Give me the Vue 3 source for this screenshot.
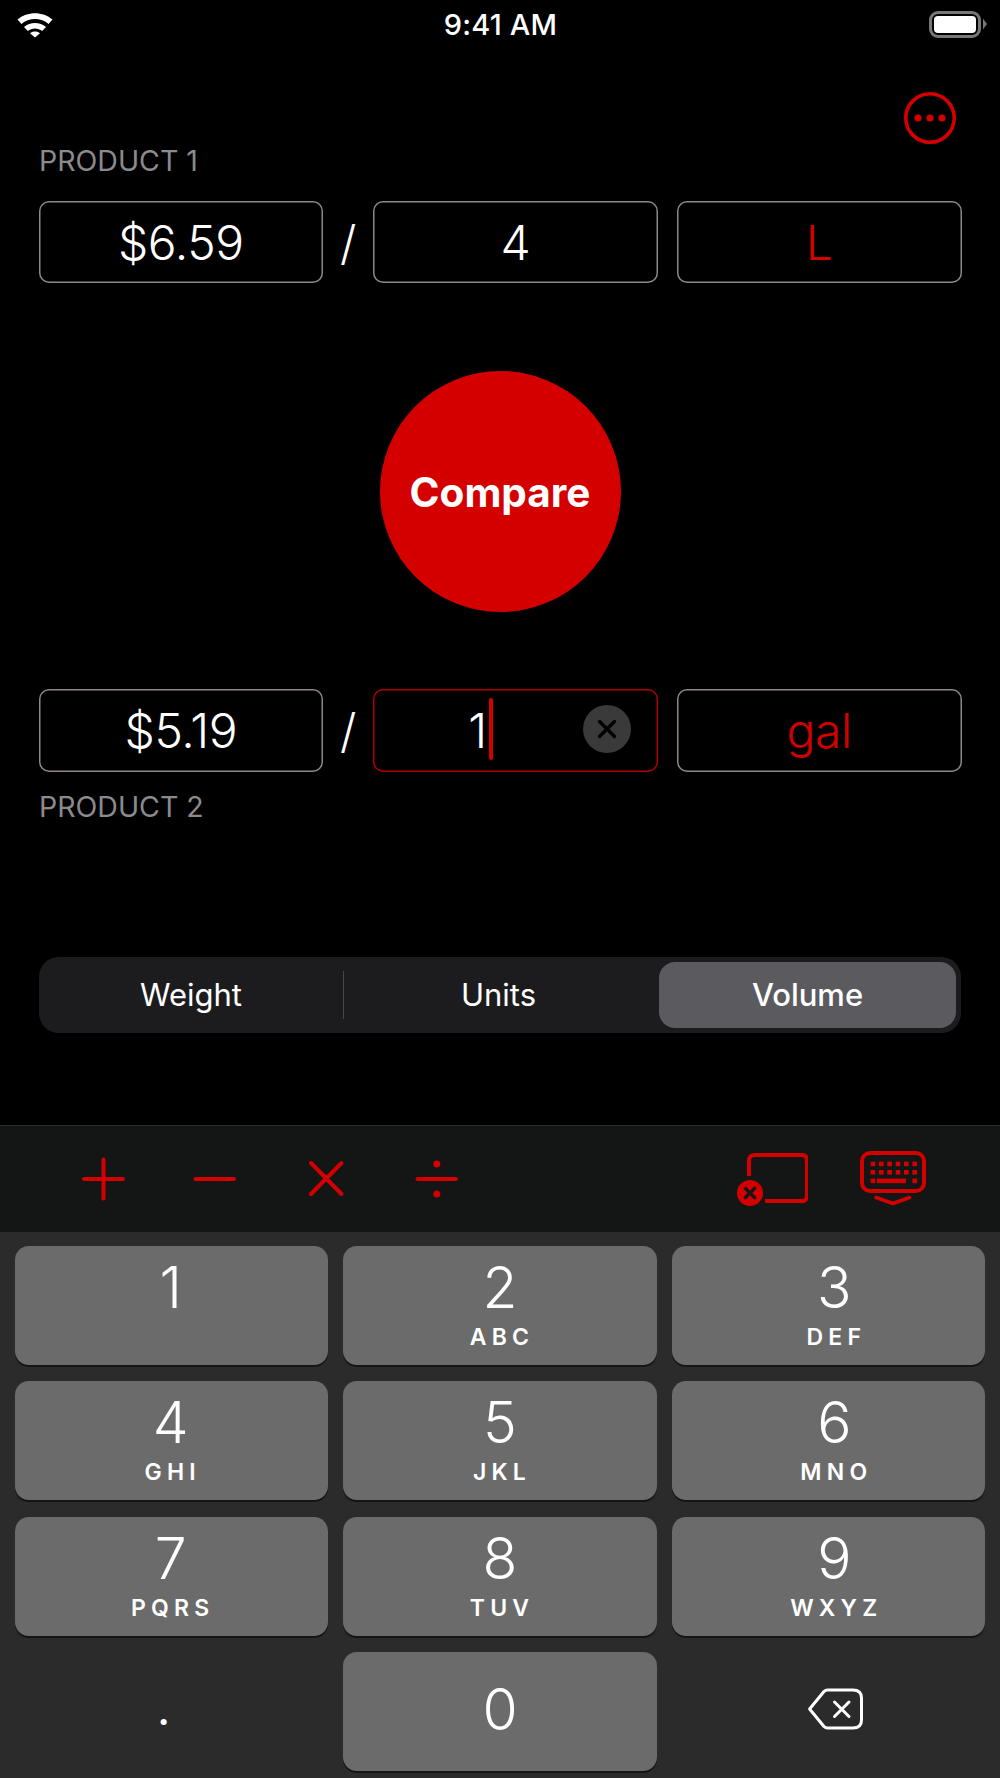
<script setup>
const keys = [
  { n: '1', l: '' },
  { n: '2', l: 'ABC' },
  { n: '3', l: 'DEF' },
  { n: '4', l: 'GHI' },
  { n: '5', l: 'JKL' },
  { n: '6', l: 'MNO' },
  { n: '7', l: 'PQRS' },
  { n: '8', l: 'TUV' },
  { n: '9', l: 'WXYZ' },
];
const keyboardDots = [];
for (const y of [1, 9.4]) {
  for (let i = 0; i < 6; i++) keyboardDots.push({ x: 10.6 + i * 8.35, y });
}
</script>

<template>
  <div class="screen">
    <div class="status">
      <svg class="wifi" width="38" height="28" viewBox="0 0 38 28">
        <path d="M1.5 9.5C11 1 27 1 36.5 9.5L32.6 14C25 7.4 13 7.4 5.4 14Z" fill="#fff" />
        <path d="M8 17C14 11.8 24 11.8 30 17L26.2 21C22.2 17.6 15.8 17.6 11.8 21Z" fill="#fff" />
        <path d="M14 23.2C16.8 20.8 21.2 20.8 24 23.2L19 27.6Z" fill="#fff" />
      </svg>
      <span class="time">9:41 AM</span>
      <div class="battery">
        <div class="battery-fill"></div>
        <div class="battery-nub"></div>
      </div>
    </div>

    <div class="more-row">
      <svg width="52" height="52" viewBox="0 0 52 52">
        <circle cx="26" cy="26" r="24.2" fill="none" stroke="#d40000" stroke-width="3.6" />
        <circle cx="14" cy="26" r="3.6" fill="#d40000" />
        <circle cx="26" cy="26" r="3.6" fill="#d40000" />
        <circle cx="38" cy="26" r="3.6" fill="#d40000" />
      </svg>
    </div>

    <div class="label first">PRODUCT 1</div>
    <div class="fields first-fields">
      <div class="field">$6.59</div>
      <div class="slash">/</div>
      <div class="field">4</div>
      <div class="field unit">L</div>
    </div>

    <button class="compare">Compare</button>

    <div class="fields second-fields">
      <div class="field">$5.19</div>
      <div class="slash">/</div>
      <div class="field active">
        <span class="typed">1<i class="caret"></i></span>
        <svg class="clear" width="48" height="48" viewBox="0 0 48 48">
          <circle cx="24" cy="24" r="24" fill="#3a3a3a" />
          <path d="M16.5 16.5L31.5 31.5M31.5 16.5L16.5 31.5" stroke="#000" stroke-width="3.4" stroke-linecap="round" />
        </svg>
      </div>
      <div class="field unit">gal</div>
    </div>
    <div class="label second">PRODUCT 2</div>

    <div class="segments">
      <div class="seg seg-weight">Weight</div>
      <div class="seg seg-units">Units</div>
      <div class="seg seg-volume">Volume</div>
    </div>

    <div class="toolbar">
      <svg class="ops" width="480" height="60" viewBox="0 0 480 60">
        <g stroke="#d40000" stroke-width="4" stroke-linecap="round" fill="none">
          <path d="M84 30H123M103.5 10.5V49.5" />
          <path d="M195.5 30H234" />
          <path d="M311 14L341.5 45M341.5 14L311 45" />
          <path d="M417.5 30H456" />
        </g>
        <circle cx="436.8" cy="15" r="3.5" fill="#d40000" />
        <circle cx="436.8" cy="45" r="3.5" fill="#d40000" />
      </svg>
      <svg class="clear-all" width="72" height="64" viewBox="0 0 72 64">
        <path d="M13 24V9Q13 3 19 3H66Q71 3 71 9V43Q71 49 66 49H29" fill="none" stroke="#d40000" stroke-width="4" />
        <circle cx="14" cy="41" r="13" fill="#d40000" />
        <path d="M9.4 36.4L18.6 45.6M18.6 36.4L9.4 45.6" stroke="#141515" stroke-width="3.4" stroke-linecap="round" />
      </svg>
      <svg class="hide-kb" width="66" height="56" viewBox="0 0 66 56">
        <rect x="2" y="2" width="62" height="38" rx="8" fill="none" stroke="#d40000" stroke-width="4" />
        <rect v-for="(d, i) in keyboardDots" :key="i" :x="d.x" :y="d.y + 9.6" width="4.6" height="4.6" fill="#d40000" />
        <rect x="10.6" y="27.6" width="4.6" height="4.6" fill="#d40000" />
        <rect x="17" y="27.6" width="29" height="4.6" fill="#d40000" />
        <rect x="52.4" y="27.6" width="4.6" height="4.6" fill="#d40000" />
        <path d="M16 46.5L33 52.5L49.5 46.5" fill="none" stroke="#d40000" stroke-width="3.6" stroke-linecap="round" stroke-linejoin="round" />
      </svg>
    </div>

    <div class="keypad">
      <div v-for="k in keys" :key="k.n" class="key">
        <span class="digit">{{ k.n }}</span>
        <span class="letters">{{ k.l }}</span>
      </div>
      <div class="key plain"><span class="point">.</span></div>
      <div class="key">
        <span class="digit zero">0</span>
      </div>
      <div class="key plain">
        <svg class="backspace" width="56" height="42" viewBox="0 0 56 42">
          <path d="M2.6 21L17 3.5Q18.5 2 20.5 2H46Q54.5 2 54.5 10V32Q54.5 40 46 40H20.5Q18.5 40 17 38.5Z" fill="none" stroke="#fff" stroke-width="3" stroke-linejoin="round" />
          <path d="M27.5 14L42 28.5M42 14L27.5 28.5" stroke="#fff" stroke-width="3" stroke-linecap="round" />
        </svg>
      </div>
    </div>
  </div>
</template>

<style scoped>
.screen {
  width: 1000px;
  height: 1778px;
  overflow: hidden;
  background: #000;
  color: #fff;
  font-family: Inter, "Liberation Sans", sans-serif;
  display: flex;
  flex-direction: column;
}
.status {
  height: 48px;
  flex: none;
  display: flex;
  align-items: center;
  justify-content: space-between;
  padding: 0 19px 0 16px;
}
.wifi {
  margin-top: -1px;
}
.time {
  font-size: 29px;
  font-weight: 500;
  letter-spacing: 0.2px;
  margin-left: 18px;
}
.battery {
  width: 52px;
  height: 27px;
  box-sizing: border-box;
  border: 3px solid #777;
  border-radius: 9px;
  padding: 2px;
  position: relative;
}
.battery-fill {
  width: 100%;
  height: 100%;
  background: #fff;
  border-radius: 4px;
}
.battery-nub {
  position: absolute;
  right: -9px;
  top: 5px;
  width: 4px;
  height: 11px;
  background: #777;
  clip-path: polygon(0 0, 100% 50%, 0 100%);
}
.more-row {
  margin-top: 44px;
  height: 52px;
  flex: none;
  display: flex;
  justify-content: flex-end;
  padding-right: 44px;
}
.label {
  flex: none;
  margin-left: 39px;
  font-size: 28.5px;
  line-height: 30px;
  color: #8b8b8d;
}
.label.first {
  margin-top: 1.5px;
}
.label.second {
  margin-top: 19.5px;
}
.fields {
  flex: none;
  display: flex;
  margin: 0 38.5px;
}
.first-fields {
  margin-top: 25px;
}
.second-fields {
  margin-top: 77px;
}
.field {
  flex: 1;
  height: 82.5px;
  box-sizing: border-box;
  box-shadow: inset 0 0 0 1.5px #8f8786;
  border-radius: 10px;
  display: flex;
  align-items: center;
  justify-content: center;
  font-size: 48px;
  font-weight: 350;
  letter-spacing: -0.4px;
  padding-top: 1px;
  position: relative;
}
.field.unit {
  color: #d40000;
  margin-left: 19px;
}
.field.active {
  box-shadow: inset 0 0 0 1.5px #b00000;
}
.slash {
  width: 50px;
  flex: none;
  text-align: center;
  font-size: 47px;
  font-weight: 300;
  line-height: 83px;
}
.typed {
  position: relative;
  margin-right: 76px;
}
.caret {
  position: absolute;
  left: 100%;
  margin-left: 2px;
  top: -3px;
  width: 4.5px;
  height: 62px;
  border-radius: 3px;
  background: #d40000;
}
.clear {
  position: absolute;
  right: 27px;
  top: 16px;
}
.compare {
  flex: none;
  align-self: center;
  margin-top: 87.5px;
  width: 241px;
  height: 241px;
  border: none;
  border-radius: 50%;
  background: #d40000;
  color: #fff;
  font-family: inherit;
  font-size: 40.5px;
  font-weight: 700;
  padding: 2px 0 0;
}
.segments {
  flex: none;
  margin: 135px 39px 0;
  height: 76.5px;
  box-sizing: border-box;
  padding: 5px;
  background: #1c1c1e;
  border-radius: 20px;
  display: flex;
  font-size: 31px;
}
.seg {
  display: flex;
  align-items: center;
  justify-content: center;
}
.seg-weight {
  width: 300px;
  padding-right: 6px;
  box-sizing: border-box;
  position: relative;
}
.seg-weight::after {
  content: '';
  position: absolute;
  right: 0;
  top: 9px;
  bottom: 9px;
  width: 1px;
  background: #48484a;
}
.seg-units {
  width: 315px;
  padding-right: 6px;
  box-sizing: border-box;
}
.seg-volume {
  flex: 1;
  background: #5b5b5f;
  border-radius: 16px;
  font-weight: 500;
}
.toolbar {
  flex: none;
  margin-top: 91.5px;
  height: 107px;
  box-sizing: border-box;
  background: #141515;
  border-top: 1px solid #2a2a2a;
  position: relative;
}
.ops {
  position: absolute;
  left: 0;
  top: 23.5px;
}
.clear-all {
  position: absolute;
  left: 736px;
  top: 26px;
}
.hide-kb {
  position: absolute;
  left: 860px;
  top: 25px;
}
.keypad {
  flex: 1;
  background: #2b2b2b;
  padding: 14px 15px 0;
  display: grid;
  grid-template-columns: repeat(3, 1fr);
  grid-auto-rows: 119px;
  column-gap: 15px;
  row-gap: 16.5px;
}
.key {
  background: #6b6b6b;
  border-radius: 14px;
  box-shadow: 0 2px 0 #151515;
  display: flex;
  flex-direction: column;
  align-items: center;
  box-sizing: border-box;
}
.key:nth-child(3n) {
  padding-left: 12px;
}
.key:nth-child(3n + 1) {
  padding-right: 2px;
}
.key.plain {
  background: none;
  box-shadow: none;
  justify-content: center;
}
.digit {
  font-size: 57px;
  font-weight: 350;
  line-height: 68px;
  margin-top: 8px;
}
.digit.zero {
  margin-top: 24px;
}
.letters {
  font-size: 23px;
  font-weight: 600;
  line-height: 26px;
  letter-spacing: 5.2px;
  margin-top: 2px;
  padding-left: 4px;
}
.point {
  font-size: 46px;
  font-weight: 400;
  margin: -8px 14px 0 0;
}
.backspace {
  margin: -6px 0 0 2px;
}
</style>
